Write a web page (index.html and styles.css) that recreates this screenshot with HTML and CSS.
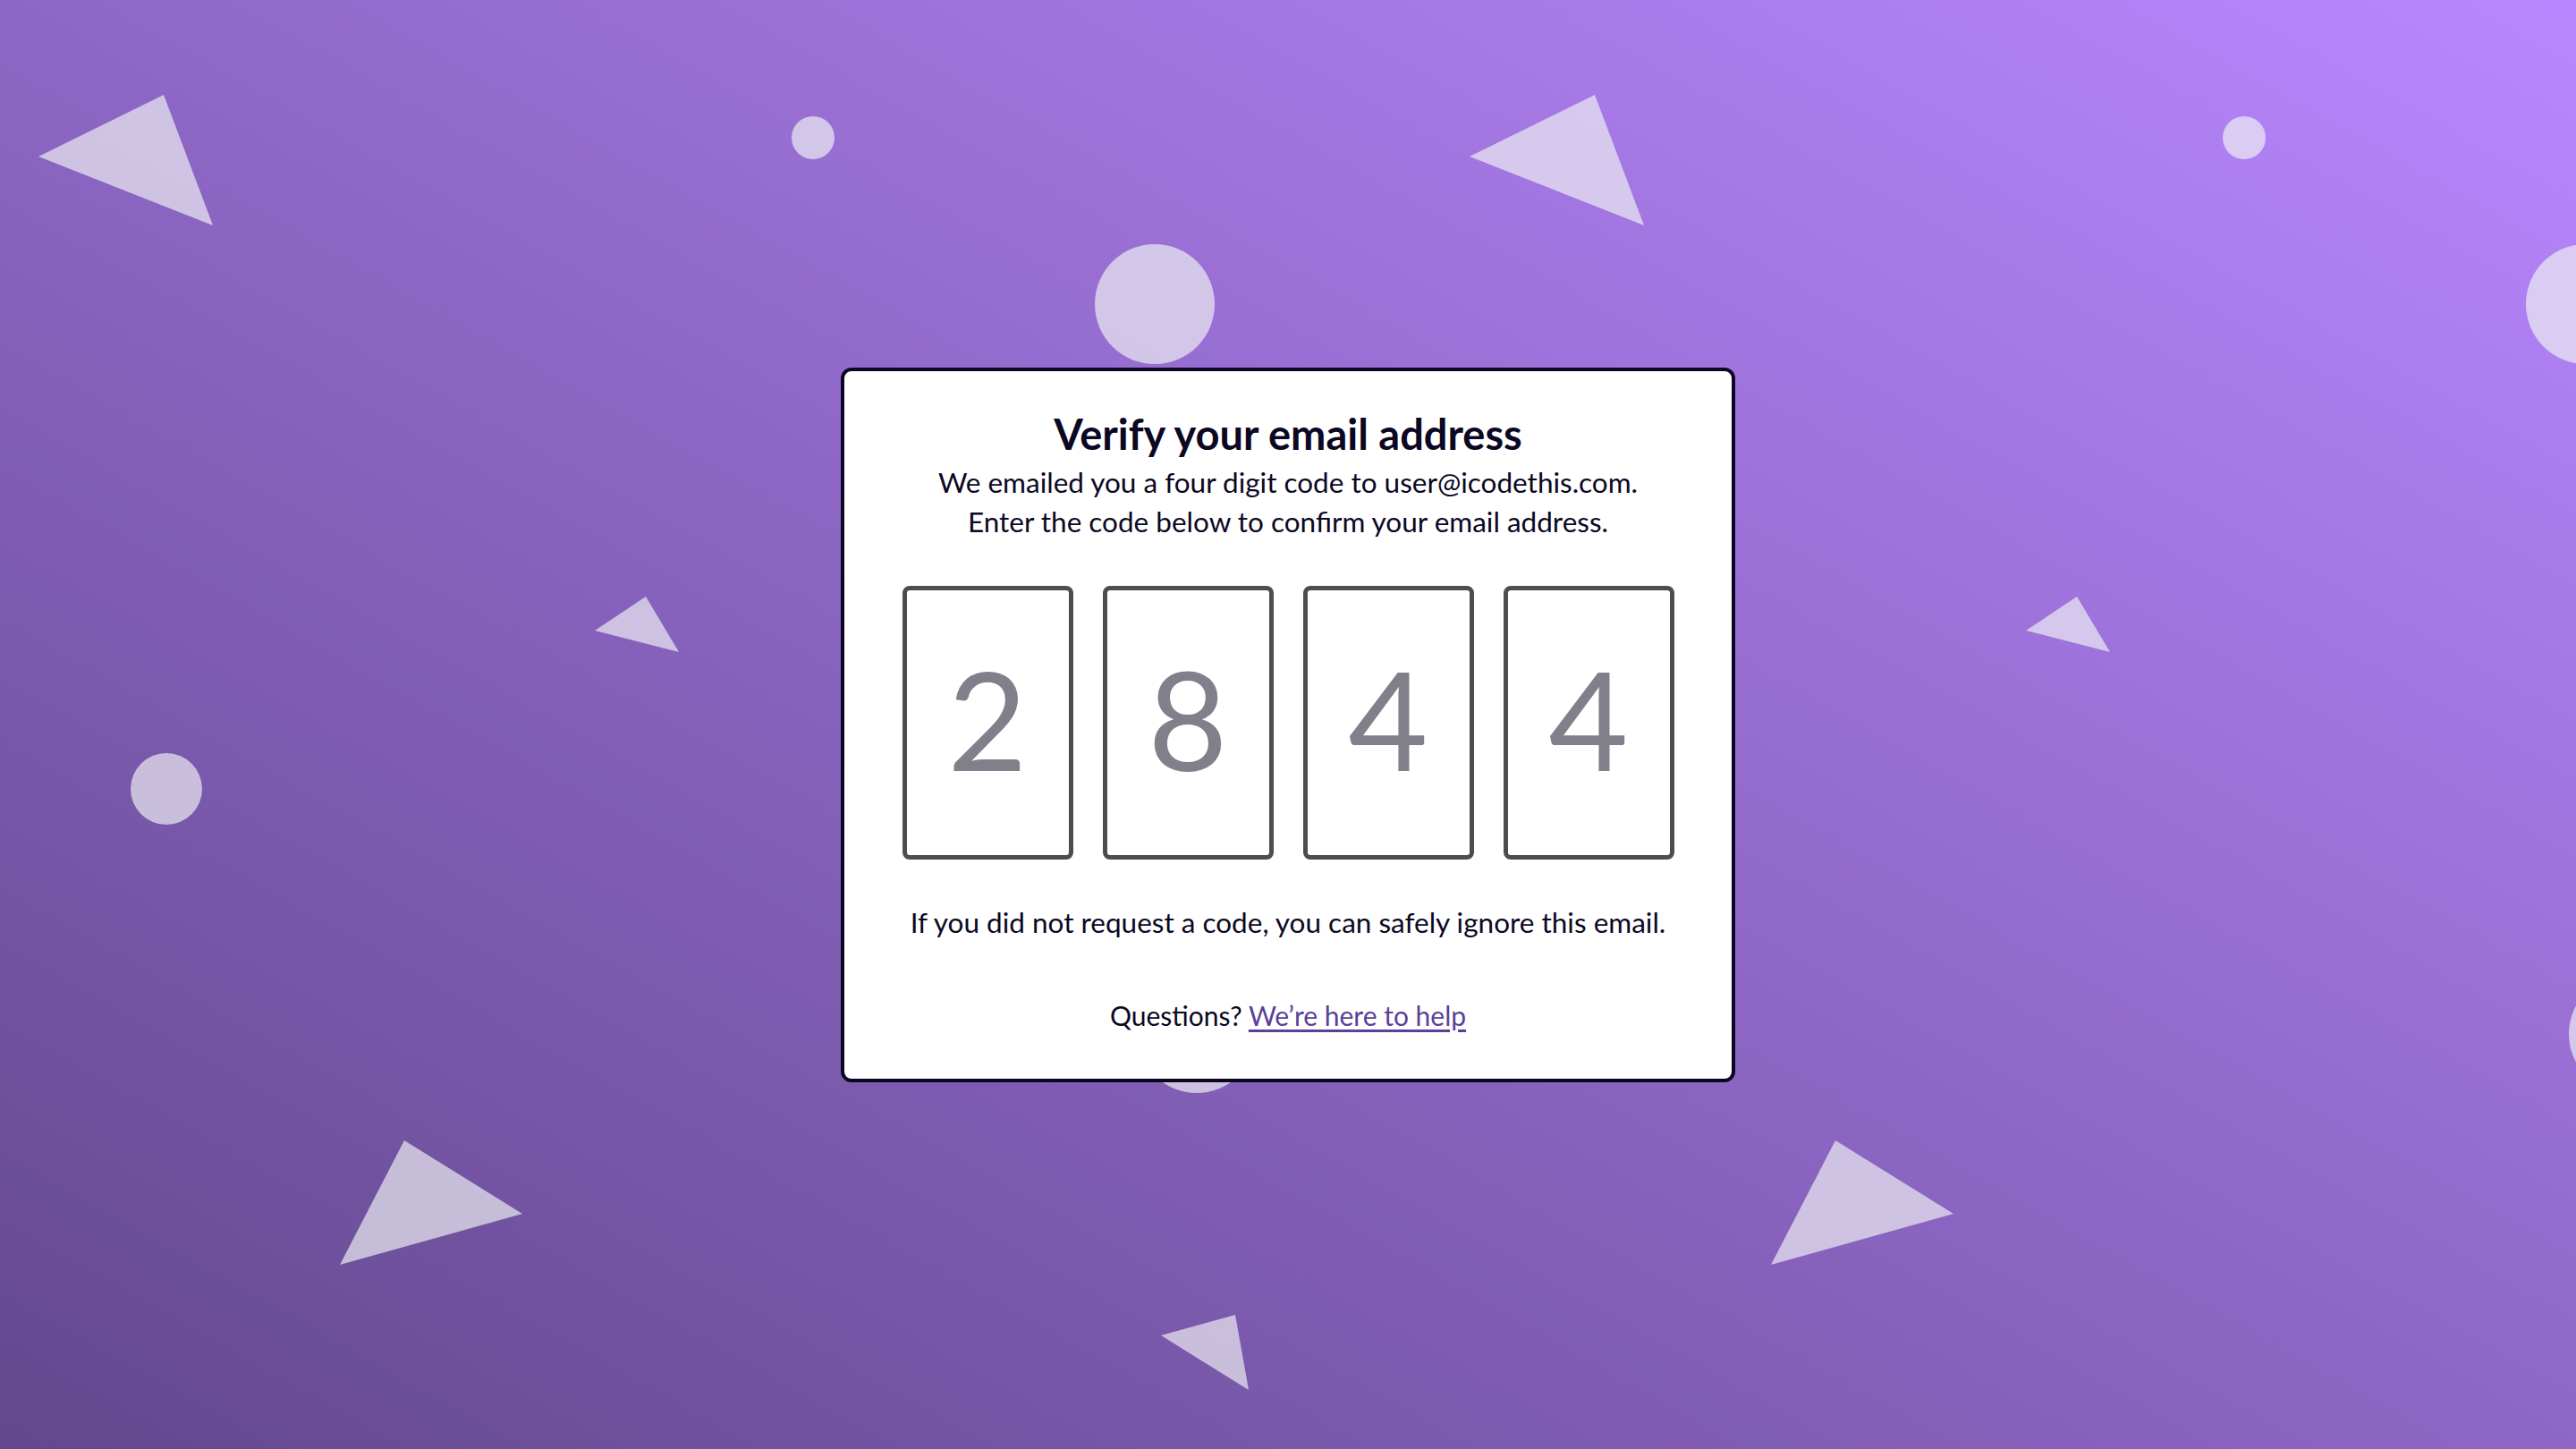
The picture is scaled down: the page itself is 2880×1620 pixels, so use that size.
FILE: index.html
```html
<!DOCTYPE html>
<html lang="en">
<head>
<meta charset="utf-8">
<title>Verify your email address</title>
<link rel="stylesheet" href="styles.css">
</head>
<body>
<svg class="backdrop" viewBox="0 0 2880 1620" width="2880" height="1620" aria-hidden="true">
  <g class="shape">
    <polygon points="43,175 183,106 238,252"/>
    <polygon points="1643,175 1783,106 1838,252"/>
    <polygon points="665,705 722,667 759,729"/>
    <polygon points="2265,705 2322,667 2359,729"/>
    <polygon points="452,1275 584,1357 380,1414"/>
    <polygon points="2052,1275 2184,1357 1980,1414"/>
    <polygon points="1298,1493 1381,1470 1396,1554"/>
    <circle cx="909" cy="154" r="24"/>
    <circle cx="2509" cy="154" r="24"/>
    <circle cx="1291" cy="340" r="67"/>
    <circle cx="2891" cy="340" r="67"/>
    <circle cx="186" cy="882" r="40"/>
    <circle cx="1786" cy="882" r="40"/>
    <circle cx="1338" cy="1156" r="66"/>
    <circle cx="2938" cy="1156" r="66"/>
  </g>
</svg>
<main class="card">
  <h1 class="title">Verify your email address</h1>
  <p class="lead">We emailed you a four digit code to user@icodethis.com.<br>Enter the code below to confirm your email address.</p>
  <div class="code">
    <div class="digit">2</div>
    <div class="digit">8</div>
    <div class="digit">4</div>
    <div class="digit">4</div>
  </div>
  <p class="note">If you did not request a code, you can safely ignore this email.</p>
  <p class="help">Questions? <a href="#" class="help-link">We’re here to help</a></p>
</main>
</body>
</html>
```
FILE: styles.css
```css
html, body {
  margin: 0;
  padding: 0;
}
body {
  width: 2880px;
  height: 1620px;
  position: relative;
  overflow: hidden;
  display: flex;
  align-items: center;
  justify-content: center;
  background: linear-gradient(to top right, #63488d 0%, #8e67c6 50%, #b987ff 100%);
  font-family: Lato, "Noto Sans", sans-serif;
  color: #0c0823;
}
.backdrop {
  position: absolute;
  left: 0;
  top: 0;
}
.shape {
  fill: rgb(239, 240, 243);
  opacity: 0.68;
}
.card {
  position: relative;
  z-index: 1;
  box-sizing: border-box;
  width: 1000px;
  background: #ffffff;
  border: 4px solid #0c0623;
  border-radius: 12px;
  padding: 40px 40px 49px;
  text-align: center;
}
.title {
  margin: 0;
  font-size: 47px;
  line-height: 60px;
  font-weight: 700;
}
.lead {
  margin: 2px 0 0;
  font-size: 31.5px;
  line-height: 44px;
}
.code {
  display: flex;
  justify-content: center;
  gap: 33px;
  margin-top: 50px;
}
.digit {
  box-sizing: border-box;
  width: 191px;
  height: 306px;
  border: 5px solid #4d4d4d;
  border-radius: 8px;
  padding-bottom: 10px;
  display: flex;
  align-items: center;
  justify-content: center;
  font-size: 154px;
  font-weight: 400;
  color: #827f8b;
}
.note {
  margin: 48px 0 0;
  font-size: 31.5px;
  line-height: 44px;
}
.help {
  margin: 60px 0 0;
  font-size: 30px;
  line-height: 44px;
}
.help-link {
  color: #5b3f98;
  text-decoration: underline;
  text-underline-offset: 4px;
}
```
